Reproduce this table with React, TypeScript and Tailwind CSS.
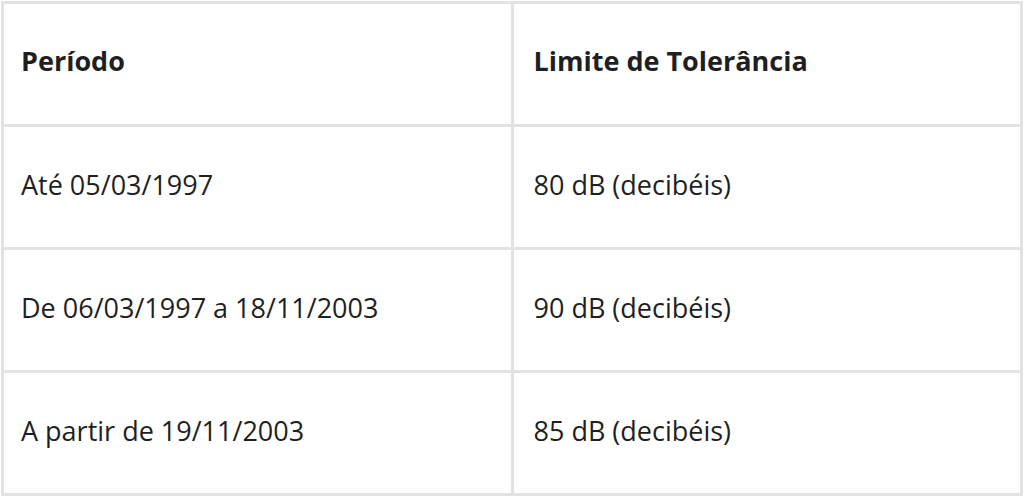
export default function App() {
  const rows = [
    ["Até 05/03/1997", "80 dB (decibéis)"],
    ["De 06/03/1997 a 18/11/2003", "90 dB (decibéis)"],
    ["A partir de 19/11/2003", "85 dB (decibéis)"],
  ];

  return (
    <main className="w-[1024px] h-[496px] bg-white p-px font-['Open_Sans',sans-serif] text-[#1f1f1f]">
      <table className="w-full border-collapse table-fixed">
        <tbody>
          <tr className="h-[123px]">
            <th className="border-[3px] border-[#e2e2e2] text-left font-bold text-[27px] leading-none pl-[17px] pb-[8px]">
              Período
            </th>
            <th className="border-[3px] border-[#e2e2e2] text-left font-bold text-[27px] leading-none pl-[20px] pb-[8px]">
              Limite de Tolerância
            </th>
          </tr>
          {rows.map((r) => (
            <tr key={r[0]} className="h-[123px]">
              <td className="border-[3px] border-[#e2e2e2] text-[27px] leading-none pl-[17px] pb-[6px]">{r[0]}</td>
              <td className="border-[3px] border-[#e2e2e2] text-[27px] leading-none pl-[20px] pb-[6px]">{r[1]}</td>
            </tr>
          ))}
        </tbody>
      </table>
    </main>
  );
}
